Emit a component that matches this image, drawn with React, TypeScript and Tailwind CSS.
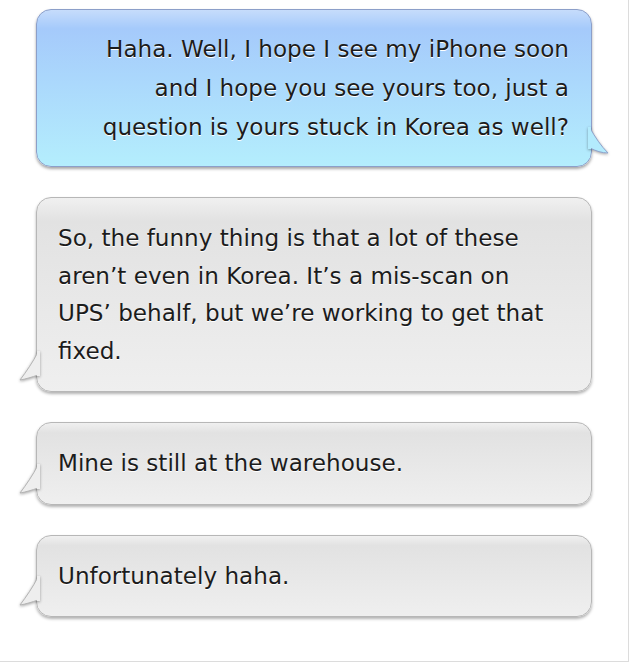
import React from "react";

type Msg = { text: string; mine?: boolean };

const messages: Msg[] = [
    { text: "Haha. Well, I hope I see my iPhone soon and I hope you see yours too, just a question is yours stuck in Korea as well?", mine: true },
    { text: "So, the funny thing is that a lot of these aren\u2019t even in Korea. It\u2019s a mis-scan on UPS\u2019 behalf, but we\u2019re working to get that fixed." },
    { text: "Mine is still at the warehouse." },
    { text: "Unfortunately haha." },
];

// little speech tails, drawn over the bubble edge
const TailRight = () => (
    <svg className="absolute right-[-20px] bottom-[8px] drop-shadow-[0_1px_1.5px_rgba(0,0,0,0.35)]" width="23" height="34" viewBox="0 0 23 34">
        <path d="M2 4 C7 13 13 22 20 29 C14 29 8 27 2 24 Z" fill="#b3ebfd" stroke="#8fa3cc" strokeWidth="1" />
        <rect x="0" y="3" width="3" height="22" fill="#b3ebfd" />
    </svg>
);

const TailLeft = () => (
    <svg className="absolute left-[-20px] bottom-[8px] drop-shadow-[0_1px_1.5px_rgba(0,0,0,0.35)]" width="23" height="34" viewBox="0 0 23 34">
        <path d="M21 3 C16 13 9 23 3 31 C9 30 15 28 21 26 Z" fill="#eeeeee" stroke="#b4b4b4" strokeWidth="1" />
        <rect x="20" y="2" width="3" height="25" fill="#eeeeee" />
    </svg>
);

const Bubble = ({ msg }: { msg: Msg }) => {
    if (msg.mine) {
        return (
            <div className="relative w-[556px] rounded-[15px] border border-[#8c9fc9] bg-gradient-to-b from-[#c6dcfb] via-[#a5cafb] via-[12%] to-[#b4eefd] px-[22px] pt-[20px] pb-[19px] shadow-[0_2px_3px_rgba(0,0,0,0.35)]">
                <TailRight />
                <p className="relative ml-auto w-[495px] text-right leading-[39px]">{msg.text}</p>
            </div>
        );
    }
    return (
        <div className="relative w-[556px] rounded-[15px] border border-[#b7b7b7] bg-gradient-to-b from-[#f0f0f0] via-[#e2e2e2] via-[12%] to-[#efefef] px-[21px] pt-[22px] pb-[21px] shadow-[0_2px_3px_rgba(0,0,0,0.3)]">
            <TailLeft />
            <p className="relative w-[495px] text-left leading-[37.5px]">{msg.text}</p>
        </div>
    );
};

export default function App() {
    return (
        <div className="w-[629px] h-[662px] bg-white border-r border-b border-[#dcdcdc]">
            <div className="flex flex-col gap-[30px] pl-[36px] pt-[9px] font-['DejaVu_Sans',sans-serif] text-[23.1px] text-[#1c1c1c] [text-shadow:0_1px_0_#fff]">
                {messages.map((m, i) => (
                    <Bubble key={i} msg={m} />
                ))}
            </div>
        </div>
    );
}
